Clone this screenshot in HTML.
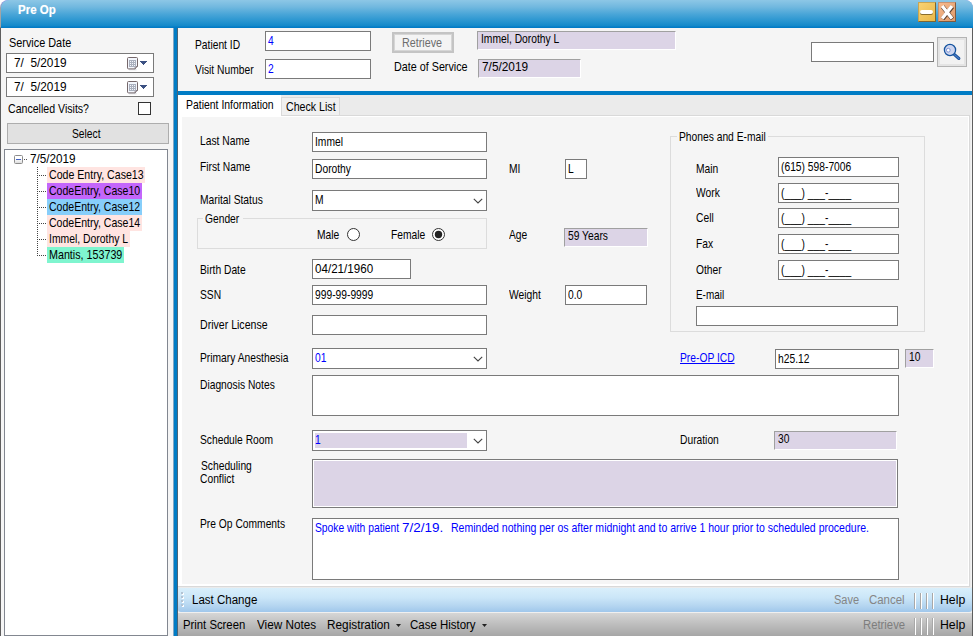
<!DOCTYPE html><html><head><meta charset="utf-8"><title>Pre Op</title><style>
*{box-sizing:border-box;margin:0;padding:0}
html,body{width:974px;height:636px;overflow:hidden;background:#fff}
body{position:relative;font-family:"Liberation Sans",sans-serif;color:#000}
.abs,.t,.u,.in,.ro,.gb{position:absolute}
.t{font-size:13px;line-height:15px;white-space:nowrap;transform-origin:0 0;transform:scaleX(0.79)}
.u{font-size:12px;line-height:14px;white-space:nowrap;transform-origin:0 0;transform:scaleX(0.94)}
.in{background:#fff;border:1px solid #7a7a7a}
.ro{background:#dcd4e6;border:1px solid;border-color:#a0a0a0 #fff #fff #a0a0a0}
.gb{border:1px solid #dcdcdc}
.gbl{position:absolute;background:#f5f5f5;height:14px}
</style></head><body>
<div class="abs" style="left:0;top:0;width:973px;height:636px;background:linear-gradient(#8a8ff0 0,#a4a4a4 9px,#a4a4a4 27px,#5e5e5e 28px);border-radius:8px 8px 0 0"></div>
<div class="abs" style="left:1px;top:0;width:972px;height:28px;border-radius:8px 8px 0 0;background:linear-gradient(#8dc7e6 0%,#71b8df 25%,#4aa6d8 50%,#2995d0 75%,#1489ca 92%,#027bc6 97%,#027bc6 100%)"></div>
<div class="abs" style="left:18px;top:3px;font-weight:bold;font-size:12px;line-height:14px;color:#fff;white-space:nowrap;transform-origin:0 0;transform:scaleX(.96);text-shadow:0 0 1px rgba(255,255,255,.4)">Pre Op</div>
<div class="abs" style="left:918px;top:2px;width:18px;height:20px;background:linear-gradient(135deg,#f8d272,#e9b849);border:1px solid;border-color:#c9a552 #7d6631 #7d6631 #c9a552"></div>
<div class="abs" style="left:920px;top:10px;width:13px;height:4px;background:#fff;border-radius:2px;box-shadow:0 1px 0 #8a6d2c"></div>
<div class="abs" style="left:938px;top:2px;width:18px;height:20px;background:linear-gradient(135deg,#f6b98c,#dd9a6b);border:1px solid;border-color:#c99472 #7d5a41 #7d5a41 #c99472"></div>
<svg class="abs" style="left:939px;top:4px" width="16" height="16" viewBox="0 0 16 16"><path d="M3.2 2 L13 14.4 M13 2 L3.2 14.4" stroke="#5a4030" stroke-width="4.2" stroke-linecap="butt" transform="translate(0.4,0.6)"/><path d="M3.2 2 L13 14.4 M13 2 L3.2 14.4" stroke="#fff" stroke-width="3.3" stroke-linecap="butt"/></svg>
<div class="abs" style="left:1px;top:28px;width:172px;height:608px;background:#f5f5f5"></div>
<div class="t" style="left:9px;top:35px;transform:scaleX(0.8358);">Service Date</div>
<div class="in" style="left:6px;top:53px;width:148px;height:20px;"></div>
<div class="t" style="left:14px;top:55px;transform:scaleX(0.9096);">7/&nbsp; 5/2019</div>
<svg class="abs" style="left:126px;top:56px" width="14" height="15" viewBox="0 0 14 15"><path d="M3 13.7h7.6" fill="none" stroke="#dfe1e6" stroke-width="1.3"/><path d="M2.5 1.5h8a1 1 0 0 1 1 1v8l-2.4 2.4h-6.6a1 1 0 0 1-1-1v-9.4a1 1 0 0 1 1-1z" fill="#f3f6fc" stroke="#75676a" stroke-width="1"/><path d="M9.2 12.8v-2.2h2.2" fill="#dfe4ef" stroke="#75676a" stroke-width="0.9"/><rect x="3" y="4" width="7" height="7" fill="#aab0be"/><path d="M4 5h1v1h-1zM6 5h1v1h-1zM8 5h1v1h-1zM4 7h1v1h-1zM6 7h1v1h-1zM8 7h1v1h-1zM4 9h1v1h-1zM6 9h1v1h-1zM8 9h1v1h-1z" fill="#f4f6fb"/></svg>
<svg class="abs" style="left:140px;top:61px" width="7" height="4" viewBox="0 0 7 4" shape-rendering="crispEdges"><path d="M0 0h7v1h-7zM1 1h5v1h-5zM2 2h3v1h-3zM3 3h1v1h-1z" fill="#3c5182"/></svg>
<div class="in" style="left:6px;top:77px;width:148px;height:20px;"></div>
<div class="t" style="left:14px;top:79px;transform:scaleX(0.9096);">7/&nbsp; 5/2019</div>
<svg class="abs" style="left:126px;top:80px" width="14" height="15" viewBox="0 0 14 15"><path d="M3 13.7h7.6" fill="none" stroke="#dfe1e6" stroke-width="1.3"/><path d="M2.5 1.5h8a1 1 0 0 1 1 1v8l-2.4 2.4h-6.6a1 1 0 0 1-1-1v-9.4a1 1 0 0 1 1-1z" fill="#f3f6fc" stroke="#75676a" stroke-width="1"/><path d="M9.2 12.8v-2.2h2.2" fill="#dfe4ef" stroke="#75676a" stroke-width="0.9"/><rect x="3" y="4" width="7" height="7" fill="#aab0be"/><path d="M4 5h1v1h-1zM6 5h1v1h-1zM8 5h1v1h-1zM4 7h1v1h-1zM6 7h1v1h-1zM8 7h1v1h-1zM4 9h1v1h-1zM6 9h1v1h-1zM8 9h1v1h-1z" fill="#f4f6fb"/></svg>
<svg class="abs" style="left:140px;top:85px" width="7" height="4" viewBox="0 0 7 4" shape-rendering="crispEdges"><path d="M0 0h7v1h-7zM1 1h5v1h-5zM2 2h3v1h-3zM3 3h1v1h-1z" fill="#3c5182"/></svg>
<div class="t" style="left:7.6px;top:101px;transform:scaleX(0.8143);">Cancelled Visits?</div>
<div class="in" style="left:138px;top:102px;width:13px;height:13px;border-color:#333"></div>
<div class="abs" style="left:7px;top:123px;width:162px;height:21px;background:#e1e1e1;border:1px solid #adadad"></div>
<div class="t" style="left:72px;top:126px;">Select</div>
<div class="in" style="left:4px;top:149px;width:164px;height:487px;border-color:#828790"></div>
<div class="abs" style="left:14px;top:155px;width:9px;height:9px;border:1px solid #8c8c8c;border-radius:1.5px;background:linear-gradient(#fff 40%,#dedede)"></div>
<div class="abs" style="left:16px;top:159px;width:5px;height:1px;background:#4361c2"></div>
<div class="abs" style="left:24px;top:159px;width:4px;height:1px;background-image:linear-gradient(90deg,#555 50%,transparent 50%);background-size:2px 1px"></div>
<div class="t" style="left:30px;top:151px;transform:scaleX(0.9011);">7/5/2019</div>
<div class="abs" style="left:37px;top:167px;width:1px;height:89px;background-image:linear-gradient(#444 50%,transparent 50%);background-size:1px 2px"></div>
<div class="abs" style="left:39px;top:175px;width:7px;height:1px;background-image:linear-gradient(90deg,#444 50%,transparent 50%);background-size:2px 1px"></div>
<div class="abs" style="left:47px;top:167px;width:98px;height:16px;background:#ffe4e1"></div>
<div class="t" style="left:49px;top:167px;transform:scaleX(0.8148);">Code Entry, Case13</div>
<div class="abs" style="left:39px;top:191px;width:7px;height:1px;background-image:linear-gradient(90deg,#444 50%,transparent 50%);background-size:2px 1px"></div>
<div class="abs" style="left:47px;top:183px;width:95px;height:16px;background:#c466fb"></div>
<div class="t" style="left:49px;top:183px;transform:scaleX(0.8099);">CodeEntry, Case10</div>
<div class="abs" style="left:39px;top:207px;width:7px;height:1px;background-image:linear-gradient(90deg,#444 50%,transparent 50%);background-size:2px 1px"></div>
<div class="abs" style="left:47px;top:199px;width:95px;height:16px;background:#87cefa"></div>
<div class="t" style="left:49px;top:199px;transform:scaleX(0.8099);">CodeEntry, Case12</div>
<div class="abs" style="left:39px;top:223px;width:7px;height:1px;background-image:linear-gradient(90deg,#444 50%,transparent 50%);background-size:2px 1px"></div>
<div class="abs" style="left:47px;top:215px;width:95px;height:16px;background:#ffe4e1"></div>
<div class="t" style="left:49px;top:215px;transform:scaleX(0.8099);">CodeEntry, Case14</div>
<div class="abs" style="left:39px;top:239px;width:7px;height:1px;background-image:linear-gradient(90deg,#444 50%,transparent 50%);background-size:2px 1px"></div>
<div class="abs" style="left:47px;top:231px;width:83px;height:16px;background:#ffe4e1"></div>
<div class="t" style="left:49px;top:231px;transform:scaleX(0.7992);">Immel, Dorothy L</div>
<div class="abs" style="left:39px;top:255px;width:7px;height:1px;background-image:linear-gradient(90deg,#444 50%,transparent 50%);background-size:2px 1px"></div>
<div class="abs" style="left:47px;top:247px;width:77px;height:16px;background:#7ff5cf"></div>
<div class="t" style="left:49px;top:247px;transform:scaleX(0.8246);">Mantis, 153739</div>
<div class="abs" style="left:173px;top:28px;width:5px;height:608px;background:#007cc5;border-left:1px solid #7fa6c4;border-right:1px solid #4a6478"></div>
<div class="abs" style="left:178px;top:28px;width:794px;height:63px;background:#f5f5f5"></div>
<div class="t" style="left:195px;top:37px;">Patient ID</div>
<div class="t" style="left:195px;top:62px;">Visit Number</div>
<div class="in" style="left:265px;top:31px;width:106px;height:20px;"></div>
<div class="t" style="left:268px;top:33px;color:#00f;">4</div>
<div class="in" style="left:265px;top:59px;width:106px;height:20px;"></div>
<div class="t" style="left:268px;top:61px;color:#00f;">2</div>
<div class="abs" style="left:392px;top:32px;width:62px;height:21px;background:#f4f4f4;border:2px solid #c4c4c4;box-shadow:inset 0 0 0 1px #d6d6d6"></div>
<div class="t" style="left:402px;top:35px;color:#6d6d6d;transform:scaleX(0.8284);">Retrieve</div>
<div class="ro" style="left:477px;top:31px;width:199px;height:19px;"></div>
<div class="t" style="left:481px;top:31px;">Immel, Dorothy L</div>
<div class="t" style="left:394px;top:59px;transform:scaleX(0.8281);">Date of Service</div>
<div class="ro" style="left:478px;top:59px;width:103px;height:19px;"></div>
<div class="t" style="left:482px;top:59px;transform:scaleX(0.911);">7/5/2019</div>
<div class="in" style="left:811px;top:42px;width:123px;height:20px;"></div>
<div class="abs" style="left:937px;top:37px;width:30px;height:30px;background:#f2f2f2;border:1px solid #b4b4b4;box-shadow:inset 0 0 0 2px #e4e4e4"></div>
<svg class="abs" style="left:941px;top:41px" width="22" height="22" viewBox="0 0 22 22"><path d="M13.2 13.4 L17.9 17.5" stroke="#174f9c" stroke-width="3" stroke-linecap="round"/><path d="M13.2 13.4 L17.9 17.5" stroke="#4a7dc4" stroke-width="1.2" stroke-linecap="round"/><circle cx="9" cy="9" r="5.6" fill="#cdd5ef" stroke="#15539e" stroke-width="1.3"/><circle cx="7.3" cy="9.2" r="1.9" fill="#fff" stroke="#7b93d6" stroke-width="1"/></svg>
<div class="abs" style="left:178px;top:91px;width:794px;height:4px;background:#007cc5"></div>
<div class="abs" style="left:178px;top:95px;width:794px;height:517px;background:#ebebeb"></div>
<div class="abs" style="left:971px;top:95px;width:1px;height:492px;background:#f3f3f3"></div>
<div class="abs" style="left:178px;top:115px;width:792px;height:472px;background:#fff;border:1px solid #d9d9d9;border-left:none"></div>
<div class="abs" style="left:182px;top:117px;width:786px;height:467px;background:#f5f5f5"></div>
<div class="abs" style="left:178px;top:95px;width:103px;height:22px;background:#fff"></div>
<div class="abs" style="left:281px;top:97px;width:59px;height:19px;background:#f0f0f0;border:1px solid #d9d9d9"></div>
<div class="t" style="left:186px;top:97px;transform:scaleX(0.8028);">Patient Information</div>
<div class="t" style="left:286px;top:99px;transform:scaleX(0.8173);">Check List</div>
<div class="t" style="left:200px;top:133px;">Last Name</div>
<div class="in" style="left:312px;top:132px;width:175px;height:20px;"></div>
<div class="t" style="left:315px;top:134px;">Immel</div>
<div class="t" style="left:200px;top:159px;">First Name</div>
<div class="in" style="left:312px;top:159px;width:175px;height:20px;"></div>
<div class="t" style="left:315px;top:161px;">Dorothy</div>
<div class="t" style="left:509px;top:161px;">MI</div>
<div class="in" style="left:565px;top:159px;width:22px;height:20px;"></div>
<div class="t" style="left:568px;top:161px;">L</div>
<div class="t" style="left:200px;top:192px;">Marital Status</div>
<div class="in" style="left:312px;top:190px;width:175px;height:21px;"></div>
<div class="t" style="left:315px;top:192px;">M</div>
<svg class="abs" style="left:473px;top:198px" width="10" height="6" viewBox="0 0 10 6"><path d="M0.8 0.8 L5 5 L9.2 0.8" fill="none" stroke="#444" stroke-width="1.1"/></svg>
<div class="gb" style="left:197px;top:218px;width:290px;height:31px"></div>
<div class="gbl" style="left:203px;top:211px;width:40px"></div>
<div class="t" style="left:205px;top:211px;">Gender</div>
<div class="t" style="left:317px;top:227px;">Male</div>
<div class="abs" style="left:347px;top:228px;width:13px;height:13px;border:1px solid #333;border-radius:50%;background:#fff"></div>
<div class="t" style="left:391px;top:227px;">Female</div>
<div class="abs" style="left:432px;top:228px;width:13px;height:13px;border:1px solid #333;border-radius:50%;background:#fff"></div>
<svg class="abs" style="left:432px;top:228px" width="13" height="13"><circle cx="6.5" cy="6.5" r="3.7" fill="#222"/></svg>
<div class="t" style="left:509px;top:227px;">Age</div>
<div class="ro" style="left:564px;top:228px;width:84px;height:19px;"></div>
<div class="t" style="left:568px;top:228px;">59 Years</div>
<div class="t" style="left:200px;top:262px;">Birth Date</div>
<div class="in" style="left:312px;top:259px;width:99px;height:20px;"></div>
<div class="t" style="left:315px;top:261px;transform:scaleX(0.893);">04/21/1960</div>
<div class="t" style="left:200px;top:287px;">SSN</div>
<div class="in" style="left:312px;top:285px;width:175px;height:20px;"></div>
<div class="t" style="left:315px;top:287px;">999-99-9999</div>
<div class="t" style="left:509px;top:287px;">Weight</div>
<div class="in" style="left:565px;top:285px;width:82px;height:20px;"></div>
<div class="t" style="left:568px;top:287px;">0.0</div>
<div class="t" style="left:200px;top:317px;transform:scaleX(0.8136);">Driver License</div>
<div class="in" style="left:312px;top:315px;width:175px;height:20px;"></div>
<div class="t" style="left:200px;top:350px;">Primary Anesthesia</div>
<div class="in" style="left:312px;top:348px;width:175px;height:21px;"></div>
<div class="t" style="left:315px;top:350px;color:#00f;">01</div>
<svg class="abs" style="left:473px;top:356px" width="10" height="6" viewBox="0 0 10 6"><path d="M0.8 0.8 L5 5 L9.2 0.8" fill="none" stroke="#444" stroke-width="1.1"/></svg>
<div class="t" style="left:200px;top:377px;">Diagnosis Notes</div>
<div class="in" style="left:312px;top:375px;width:587px;height:41px;"></div>
<div class="t" style="left:200px;top:432px;">Schedule Room</div>
<div class="in" style="left:312px;top:430px;width:175px;height:21px;"></div>
<div class="abs" style="left:315px;top:433px;width:152px;height:15px;background:#dcd4e6"></div>
<div class="t" style="left:315px;top:432px;color:#00f;">1</div>
<svg class="abs" style="left:473px;top:438px" width="10" height="6" viewBox="0 0 10 6"><path d="M0.8 0.8 L5 5 L9.2 0.8" fill="none" stroke="#444" stroke-width="1.1"/></svg>
<div class="t" style="left:201px;top:458px;">Scheduling</div>
<div class="t" style="left:200px;top:471px;">Conflict</div>
<div class="in" style="left:312px;top:459px;width:586px;height:49px;background:#dcd4e6;box-shadow:inset 0 0 0 1px #fff"></div>
<div class="t" style="left:200px;top:516px;">Pre Op Comments</div>
<div class="in" style="left:312px;top:518px;width:587px;height:62px;"></div>
<div class="t" style="left:315px;top:520px;color:#00f;transform:scaleX(0.7917);">Spoke with patient</div>
<div class="t" style="left:402.4px;top:520px;color:#00f;transform:scaleX(1.0363);">7/2/19.</div>
<div class="t" style="left:451px;top:520px;color:#00f;transform:scaleX(0.8088);">Reminded nothing per os after midnight and to arrive 1 hour prior to scheduled procedure.</div>
<div class="gb" style="left:670px;top:136px;width:255px;height:196px"></div>
<div class="gbl" style="left:677px;top:129px;width:91px"></div>
<div class="t" style="left:679px;top:129px;">Phones and E-mail</div>
<div class="t" style="left:696px;top:161px;">Main</div>
<div class="in" style="left:778px;top:157px;width:121px;height:20px;"></div>
<div class="t" style="left:781px;top:159px;">(615) 598-7006</div>
<div class="t" style="left:696px;top:185px;">Work</div>
<div class="in" style="left:778px;top:183px;width:121px;height:20px;"></div>
<div class="t" style="left:781px;top:185px;">(___) ___-____</div>
<div class="t" style="left:696px;top:210px;">Cell</div>
<div class="in" style="left:778px;top:208px;width:121px;height:20px;"></div>
<div class="t" style="left:781px;top:210px;">(___) ___-____</div>
<div class="t" style="left:696px;top:236px;">Fax</div>
<div class="in" style="left:778px;top:234px;width:121px;height:20px;"></div>
<div class="t" style="left:781px;top:236px;">(___) ___-____</div>
<div class="t" style="left:696px;top:262px;">Other</div>
<div class="in" style="left:778px;top:260px;width:121px;height:20px;"></div>
<div class="t" style="left:781px;top:262px;">(___) ___-____</div>
<div class="t" style="left:696px;top:287px;transform:scaleX(0.7629);">E-mail</div>
<div class="in" style="left:696px;top:306px;width:202px;height:20px;"></div>
<div class="t" style="left:680px;top:350px;color:#00f;"><u>Pre-OP ICD</u></div>
<div class="in" style="left:775px;top:349px;width:124px;height:20px;"></div>
<div class="t" style="left:778px;top:351px;">h25.12</div>
<div class="ro" style="left:905px;top:349px;width:29px;height:19px;"></div>
<div class="t" style="left:909px;top:349px;">10</div>
<div class="t" style="left:680px;top:432px;">Duration</div>
<div class="ro" style="left:774px;top:431px;width:123px;height:19px;"></div>
<div class="t" style="left:778px;top:431px;">30</div>
<div class="abs" style="left:178px;top:588px;width:794px;height:24px;background:linear-gradient(#d9effb,#cbe6f8 40%,#b4d5f0 75%,#a0c7eb);border-radius:2px 0 3px 3px"></div>
<div class="abs" style="left:178px;top:612px;width:794px;height:24px;background:linear-gradient(#f0f0f0 0,#f0f0f0 1px,#d6d6d6 1px,#bebebe 50%,#a6a6a6)"></div>
<div class="abs" style="left:181px;top:592px;width:2px;height:2px;background:#b3c3d3;box-shadow:1px 1px 0 #fff"></div>
<div class="abs" style="left:181px;top:596px;width:2px;height:2px;background:#b3c3d3;box-shadow:1px 1px 0 #fff"></div>
<div class="abs" style="left:181px;top:600px;width:2px;height:2px;background:#b3c3d3;box-shadow:1px 1px 0 #fff"></div>
<div class="abs" style="left:181px;top:604px;width:2px;height:2px;background:#b3c3d3;box-shadow:1px 1px 0 #fff"></div>
<div class="u" style="left:192px;top:593px;transform:scaleX(0.9603);">Last Change</div>
<div class="u" style="left:833.5px;top:593px;color:#858585;transform:scaleX(0.9177);">Save</div>
<div class="u" style="left:869px;top:593px;color:#858585;transform:scaleX(0.9531);">Cancel</div>
<div class="u" style="left:940px;top:593px;transform:scaleX(1.0211);">Help</div>
<div class="u" style="left:183.4px;top:618px;transform:scaleX(0.942);">Print Screen</div>
<div class="u" style="left:257px;top:618px;transform:scaleX(0.9773);">View Notes</div>
<div class="u" style="left:327px;top:618px;transform:scaleX(0.9824);">Registration</div>
<div class="u" style="left:410.3px;top:618px;transform:scaleX(0.9551);">Case History</div>
<svg class="abs" style="left:396px;top:624px" width="6" height="4" viewBox="0 0 6 4"><path d="M0 0H5L2.5 3Z" fill="#222"/></svg>
<svg class="abs" style="left:482px;top:624px" width="6" height="4" viewBox="0 0 6 4"><path d="M0 0H5L2.5 3Z" fill="#222"/></svg>
<div class="u" style="left:863px;top:618px;color:#7d7d7d;transform:scaleX(0.9422);">Retrieve</div>
<div class="u" style="left:940px;top:618px;transform:scaleX(1.0211);">Help</div>
<div class="abs" style="left:914px;top:593px;width:2px;height:16px;background:linear-gradient(90deg,#a8a8a8 50%,#fff 50%)"></div>
<div class="abs" style="left:920px;top:593px;width:2px;height:16px;background:linear-gradient(90deg,#a8a8a8 50%,#fff 50%)"></div>
<div class="abs" style="left:926px;top:593px;width:2px;height:16px;background:linear-gradient(90deg,#a8a8a8 50%,#fff 50%)"></div>
<div class="abs" style="left:932px;top:593px;width:2px;height:16px;background:linear-gradient(90deg,#a8a8a8 50%,#fff 50%)"></div>
<div class="abs" style="left:914px;top:618px;width:2px;height:17px;background:linear-gradient(90deg,#a8a8a8 50%,#fff 50%)"></div>
<div class="abs" style="left:920px;top:618px;width:2px;height:17px;background:linear-gradient(90deg,#a8a8a8 50%,#fff 50%)"></div>
<div class="abs" style="left:926px;top:618px;width:2px;height:17px;background:linear-gradient(90deg,#a8a8a8 50%,#fff 50%)"></div>
<div class="abs" style="left:932px;top:618px;width:2px;height:17px;background:linear-gradient(90deg,#a8a8a8 50%,#fff 50%)"></div>
</body></html>
